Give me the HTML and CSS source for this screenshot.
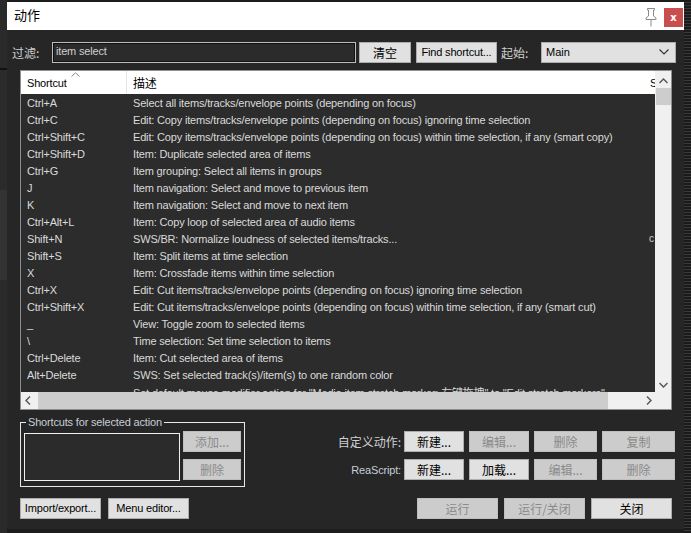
FILE: index.html
```html
<!DOCTYPE html>
<html lang="zh">
<head>
<meta charset="utf-8">
<title>动作</title>
<link rel="stylesheet" href="styles.css">
</head>
<body>
<div class="screen">
  <div class="strip left-strip"></div>
  <div class="dialog">
    <div class="titlebar">
      <span class="title">动作</span>
      <span class="pin">
        <svg width="14" height="19" viewBox="0 0 14 19"><path d="M3.5 0.5h7v1.5h-1v6l2.5 2v1.5H2V10l2.5-2V2h-1z M7 11.5v7" fill="none" stroke="#8a8a8a" stroke-width="1"/></svg>
      </span>
      <span class="close">x</span>
    </div>

    <div class="filter-row">
      <span class="lbl lbl-filter">过滤:</span>
      <div class="input">item select</div>
      <button class="btn btn-clear">清空</button>
      <button class="btn btn-find">Find shortcut...</button>
      <span class="lbl lbl-start">起始:</span>
      <div class="select"><span>Main</span>
        <svg width="10" height="6" viewBox="0 0 10 6"><path d="M0.5 0.5L5 5L9.5 0.5" fill="none" stroke="#333" stroke-width="1.2"/></svg>
      </div>
    </div>

    <div class="list">
      <div class="viewport">
        <div class="row head">
          <div class="c1">Shortcut<svg class="sort" width="9" height="5" viewBox="0 0 9 5"><path d="M0.5 4.5L4.5 0.8L8.5 4.5" fill="none" stroke="#8a8a8a" stroke-width="1"/></svg></div>
          <div class="c2 cjk">描述</div>
          <div class="c3">S</div>
        </div>
        <div class="row"><div class="c1">Ctrl+A</div><div class="c2">Select all items/tracks/envelope points (depending on focus)</div><div class="c3"></div></div>
        <div class="row"><div class="c1">Ctrl+C</div><div class="c2">Edit: Copy items/tracks/envelope points (depending on focus) ignoring time selection</div><div class="c3"></div></div>
        <div class="row"><div class="c1">Ctrl+Shift+C</div><div class="c2">Edit: Copy items/tracks/envelope points (depending on focus) within time selection, if any (smart copy)</div><div class="c3"></div></div>
        <div class="row"><div class="c1">Ctrl+Shift+D</div><div class="c2">Item: Duplicate selected area of items</div><div class="c3"></div></div>
        <div class="row"><div class="c1">Ctrl+G</div><div class="c2">Item grouping: Select all items in groups</div><div class="c3"></div></div>
        <div class="row"><div class="c1">J</div><div class="c2">Item navigation: Select and move to previous item</div><div class="c3"></div></div>
        <div class="row"><div class="c1">K</div><div class="c2">Item navigation: Select and move to next item</div><div class="c3"></div></div>
        <div class="row"><div class="c1">Ctrl+Alt+L</div><div class="c2">Item: Copy loop of selected area of audio items</div><div class="c3"></div></div>
        <div class="row"><div class="c1">Shift+N</div><div class="c2">SWS/BR: Normalize loudness of selected items/tracks...</div><div class="c3">c</div></div>
        <div class="row"><div class="c1">Shift+S</div><div class="c2">Item: Split items at time selection</div><div class="c3"></div></div>
        <div class="row"><div class="c1">X</div><div class="c2">Item: Crossfade items within time selection</div><div class="c3"></div></div>
        <div class="row"><div class="c1">Ctrl+X</div><div class="c2">Edit: Cut items/tracks/envelope points (depending on focus) ignoring time selection</div><div class="c3"></div></div>
        <div class="row"><div class="c1">Ctrl+Shift+X</div><div class="c2">Edit: Cut items/tracks/envelope points (depending on focus) within time selection, if any (smart cut)</div><div class="c3"></div></div>
        <div class="row"><div class="c1">_</div><div class="c2">View: Toggle zoom to selected items</div><div class="c3"></div></div>
        <div class="row"><div class="c1">\</div><div class="c2">Time selection: Set time selection to items</div><div class="c3"></div></div>
        <div class="row"><div class="c1">Ctrl+Delete</div><div class="c2">Item: Cut selected area of items</div><div class="c3"></div></div>
        <div class="row"><div class="c1">Alt+Delete</div><div class="c2">SWS: Set selected track(s)/item(s) to one random color</div><div class="c3"></div></div>
        <div class="row"><div class="c1"></div><div class="c2">Set default mouse modifier action for "Media item stretch marker: 左键拖拽" to "Edit stretch markers"</div><div class="c3"></div></div>
      </div>
      <div class="vscroll">
        <svg class="arr" width="9" height="6" viewBox="0 0 9 6"><path d="M0.5 5L4.5 1L8.5 5" fill="none" stroke="#555" stroke-width="1.4"/></svg>
        <div class="vthumb"></div>
        <div class="vspace"></div>
        <svg class="arr" width="9" height="6" viewBox="0 0 9 6"><path d="M0.5 1L4.5 5L8.5 1" fill="none" stroke="#555" stroke-width="1.4"/></svg>
      </div>
      <div class="hscroll">
        <svg class="harr" width="6" height="9" viewBox="0 0 6 9"><path d="M5 0.5L1 4.5L5 8.5" fill="none" stroke="#555" stroke-width="1.4"/></svg>
        <div class="hthumb"></div>
        <svg class="harr harr-r" width="6" height="9" viewBox="0 0 6 9"><path d="M1 0.5L5 4.5L1 8.5" fill="none" stroke="#555" stroke-width="1.4"/></svg>
      </div>
      <div class="corner"></div>
    </div>

    <div class="lower">
      <fieldset class="group">
        <legend>Shortcuts for selected action</legend>
        <div class="group-inner">
          <div class="shortbox"></div>
          <div class="side-btns">
            <button class="btn dis sm">添加...</button>
            <button class="btn dis sm">删除</button>
          </div>
        </div>
      </fieldset>
      <div class="custom">
        <div class="crow">
          <span class="clabel">自定义动作:</span>
          <button class="btn b59">新建...</button>
          <button class="btn dis b59">编辑...</button>
          <button class="btn dis b62">删除</button>
          <button class="btn dis b72">复制</button>
        </div>
        <div class="crow">
          <span class="clabel rs">ReaScript:</span>
          <button class="btn b59">新建...</button>
          <button class="btn b59">加载...</button>
          <button class="btn dis b62">编辑...</button>
          <button class="btn dis b72">删除</button>
        </div>
      </div>
    </div>

    <div class="bottom">
      <button class="btn lat btn-imp">Import/export...</button>
      <button class="btn lat btn-menu">Menu editor...</button>
      <span class="grow"></span>
      <button class="btn dis b80">运行</button>
      <button class="btn dis b80">运行/关闭</button>
      <button class="btn b80">关闭</button>
    </div>
  </div>
  <div class="strip right-strip"></div>
</div>
</body>
</html>
```

FILE: styles.css
```css
* { box-sizing: border-box; }
html, body { margin: 0; padding: 0; }
body {
  width: 691px; height: 533px; overflow: hidden;
  background: #1d1d1d;
  font-family: "Liberation Sans", "Noto Sans CJK SC", sans-serif;
  font-size: 11px;
  color: #d8d8d8;
}
.cjk { font-family: "Noto Sans CJK SC", "Liberation Sans", sans-serif; }
.screen { display: flex; height: 533px; }
.strip { width: 7px; flex: none; }
.left-strip {
  background: linear-gradient(#2a2a2a 0 68px, #111 68px 70px, #2b2b2b 70px 190px, #333 190px 280px, #2a2a2a 280px);
}
.right-strip {
  background: repeating-linear-gradient(#1a1a1a 0 2px, #3a3a3a 2px 3px);
}
.dialog {
  width: 677px; height: 527px; margin-top: 2px;
  background: #262626;
  display: flex; flex-direction: column;
}
.titlebar {
  height: 28px; background: #fff; flex: none;
  display: flex; align-items: flex-start; padding-left: 7px; padding-top: 5px;
}
.title { font-family: "Noto Sans CJK SC", sans-serif; font-size: 13px; line-height: 16px; color: #000; flex: 1; }
.pin { width: 14px; height: 19px; margin-right: 6px; margin-top: 1px; }
.close {
  width: 19px; height: 19px; background: #c94f4f; color: #fff;
  font-family: "DejaVu Sans", sans-serif; font-size: 10px; font-weight: bold;
  display: flex; align-items: center; justify-content: center;
  margin-right: 1px; margin-top: 1px;
}

.filter-row {
  display: flex; align-items: center; height: 22px; margin-top: 11px; padding-left: 5px;
}
.lbl { font-family: "Noto Sans CJK SC", sans-serif; font-size: 12px; color: #cfcfcf; }
.lbl-filter { width: 40px; }
.input {
  width: 304px; height: 21px; border: 1px solid #bdbdbd; outline: 1px solid #111; outline-offset: -2px;
  background: #2b2b2b; color: #d0d0d0; padding: 2px 3px; font-size: 11px; letter-spacing: -0.17px;
}
.btn {
  font-family: "Noto Sans CJK SC", "Liberation Sans", sans-serif; font-size: 12px;
  background: #e1e1e1; border: 1px solid #adadad; color: #000;
  height: 21px; padding: 0; margin: 0; line-height: 19px;
  display: flex; align-items: center; justify-content: center;
}
.btn.dis { background: #cccccc; border-color: #bfbfbf; color: #8a8a8a; }
.btn-clear { width: 52px; margin-left: 3px; }
.btn-find { width: 81px; margin-left: 5px; font-family: "Liberation Sans", sans-serif; font-size: 11px; letter-spacing: -0.17px; }
.lbl-start { width: 44px; padding-left: 4px; }
.select {
  width: 135px; height: 21px; background: #e1e1e1; border: 1px solid #adadad;
  display: flex; align-items: center; justify-content: space-between; padding: 0 6px 0 4px;
  color: #000; font-size: 11px;
}

.list {
  margin: 7px 0 0 13px; width: 652px; height: 340px;
  border: 1px solid #8f8f8f;
  display: grid; grid-template-columns: 1fr 16px; grid-template-rows: 1fr 17px;
  background: #2c2c2c;
}
.viewport { overflow: hidden; }
.row { display: flex; height: 17px; align-items: center; white-space: nowrap; color: #dadada; letter-spacing: -0.17px; }
.row .c1 { width: 106px; flex: none; padding-left: 6px; }
.row .c2 { width: 521px; flex: none; padding-left: 6px; overflow: hidden; }
.row .c3 { flex: none; width: 8px; padding-left: 1px; overflow: hidden; color: #ccc; font-size: 10px; }
.row.head { height: 23px; background: #fff; color: #000; }
.row.head .c1 { height: 23px; border-right: 1px solid #e5e5e5; display: flex; align-items: center; position: relative; }
.row.head .c2 { font-size: 12px; }
.row.head .c3 { color: #000; font-size: 11px; padding-left: 2px; }
.sort { position: absolute; left: 50px; top: 1px; }

.vscroll { background: #f0f0f0; display: flex; flex-direction: column; align-items: center; padding: 7px 0 4px; }
.vthumb { width: 15px; height: 17px; background: #cdcdcd; margin-top: 4px; }
.vspace { flex: 1; }
.hscroll { background: #f0f0f0; display: flex; align-items: center; padding-left: 4px; }
.hthumb { width: 570px; height: 17px; background: #cdcdcd; margin-left: 7px; }
.harr-r { margin-left: 38px; }
.corner { background: #f0f0f0; }

.lower { display: flex; margin-top: 7px; padding-left: 13px; padding-right: 9px; }
.group {
  width: 225px; min-width: 0; height: 70px; margin: 0; padding: 0 3px 0 3px;
  border: 1px solid #e8e8e8; flex: none;
}
.group legend { font-size: 11px; color: #c6cdd6; padding: 0 2px; margin-left: 2px; line-height: 11px; letter-spacing: -0.17px; }
.group-inner { display: flex; margin-top: 5px; }
.shortbox { width: 156px; height: 48px; border: 1px solid #f0f0f0; background: #2b2b2b; flex: none; }
.side-btns { display: flex; flex-direction: column; gap: 7px; margin-left: 3px; margin-top: -2px; }
.btn.sm { width: 58px; height: 21px; }
.custom { display: flex; flex-direction: column; align-items: flex-end; gap: 7px; padding-top: 14px; flex: 1; }
.crow { display: flex; align-items: center; gap: 5px; }
.clabel { font-family: "Noto Sans CJK SC", sans-serif; font-size: 12px; color: #d0d0d0; margin-right: -2px; }
.clabel.rs { font-family: "Liberation Sans", sans-serif; font-size: 11px; color: #c6cdd6; letter-spacing: -0.17px; }
.b59 { width: 60px; }
.b62 { width: 63px; }
.b72 { width: 73px; }

.bottom { display: flex; align-items: center; margin-top: 11px; padding-left: 13px; padding-right: 12px; }
.btn.lat { font-family: "Liberation Sans", sans-serif; font-size: 11px; letter-spacing: -0.17px; }
.btn-imp { width: 81px; }
.btn-menu { width: 81px; margin-left: 7px; }
.grow { flex: 1; }
.b80 { width: 81px; margin-left: 6px; }
```
